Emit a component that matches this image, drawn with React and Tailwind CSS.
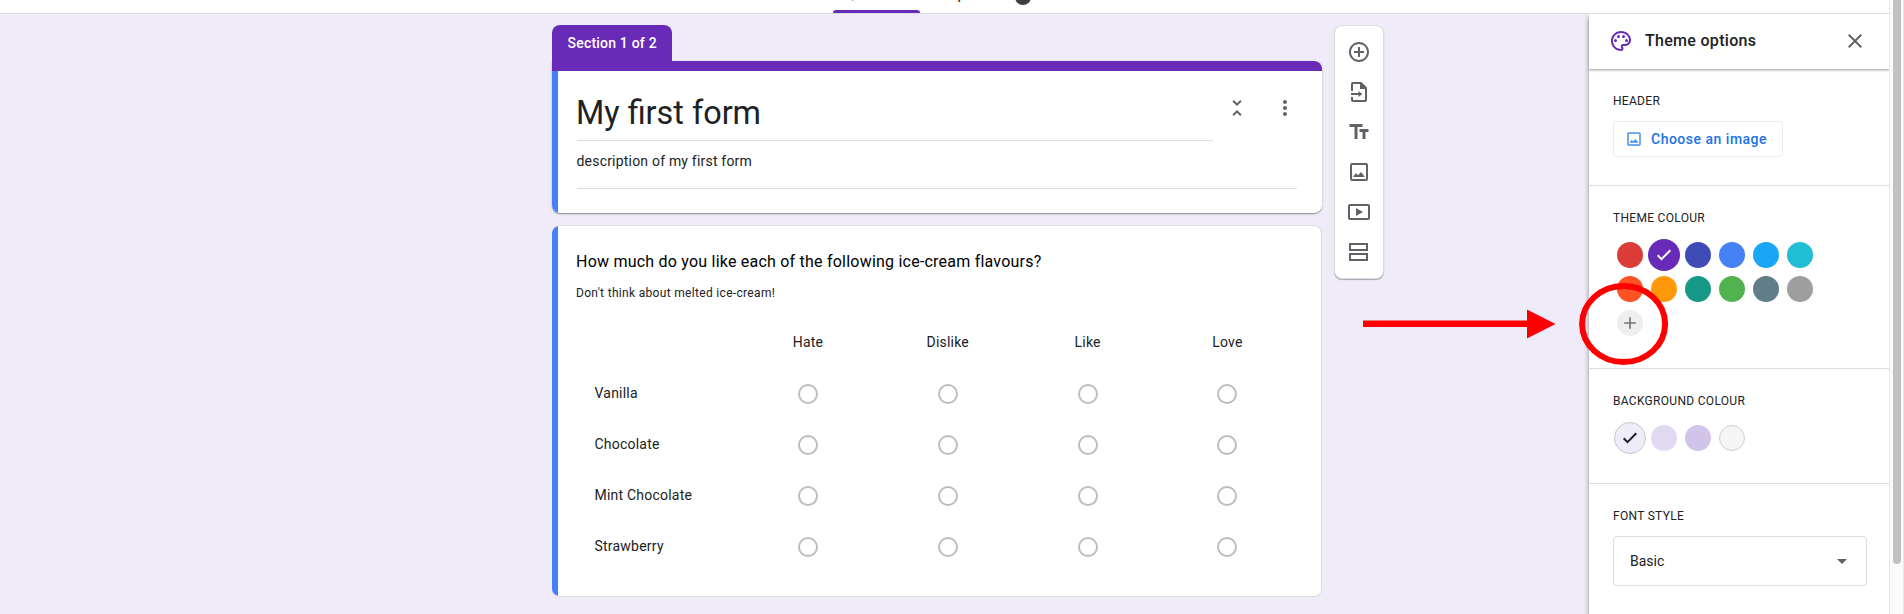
import { MdAddCircleOutline, MdTextFields, MdUnfoldLess, MdMoreVert, MdClose, MdAdd, MdArrowDropDown, MdOutlinePalette } from "react-icons/md";

function ImageIcon({ className }) {
  return (
    <svg viewBox="0 0 24 24" className={className} fill="currentColor">
      <path fillRule="evenodd" d="M5 3h14a2 2 0 0 1 2 2v14a2 2 0 0 1-2 2H5a2 2 0 0 1-2-2V5a2 2 0 0 1 2-2zm0 2v14h14V5H5z" />
      <path d="M6 17l3-4 2 2.2L14 12l4 5z" />
    </svg>
  );
}

function ImportIcon() {
  return (
    <svg viewBox="0 0 24 24" className="size-6" fill="none" stroke="currentColor" strokeWidth="2">
      <path d="M5 11V4a1 1 0 0 1 1-1h8l5 5v12a1 1 0 0 1-1 1H6a1 1 0 0 1-1-1v-3" />
      <path d="M13 2.500V9h6.500z" fill="currentColor" stroke="none" />
      <path d="M4 14h8" />
      <path d="M11.500 11l3.800 3-3.800 3z" fill="currentColor" stroke="none" />
    </svg>
  );
}

function VideoIcon() {
  return (
    <svg viewBox="0 0 24 24" className="size-6" fill="none" stroke="currentColor" strokeWidth="2">
      <rect x="2" y="5" width="20" height="14" rx="1" />
      <path d="M9 8v8l7-4z" fill="currentColor" stroke="none" />
    </svg>
  );
}

function SectionIcon() {
  return (
    <svg viewBox="0 0 24 24" className="size-6" fill="none" stroke="currentColor" strokeWidth="2">
      <rect x="3" y="4" width="17" height="6" />
      <rect x="3" y="14" width="17" height="6" />
    </svg>
  );
}

function CheckIcon({ className }) {
  return (
    <svg viewBox="0 0 18 18" className={className} fill="none" stroke="currentColor" strokeWidth="2">
      <path d="M2.700 9.300l3.800 3.800 8.800-8.800" />
    </svg>
  );
}

const tools = [
  <MdAddCircleOutline className="size-6" />,
  <ImportIcon />,
  <MdTextFields className="size-6" />,
  <ImageIcon className="size-6" />,
  <VideoIcon />,
  <SectionIcon />,
];

const themeColours = [
  "bg-[#db3c37]", "bg-[#672bb7]", "bg-[#3f4cb5]", "bg-[#4481f5]", "bg-[#1ba6f5]", "bg-[#20bed5]",
  "bg-[#ff5225]", "bg-[#ff990a]", "bg-[#179987]", "bg-[#51b250]", "bg-[#617d8b]", "bg-[#9e9e9e]",
];

function Label({ children }) {
  return <h3 className="text-[12px] leading-4 tracking-[0.3px] text-[#202124]">{children}</h3>;
}

function Header() {
  return (
    <header className="flex h-[14px] shrink-0 items-end overflow-hidden border-b border-[#dadce0] bg-white pl-[833px] text-sm font-medium">
      <div className="flex w-[87px] flex-col items-center">
        <span className="mb-[6px] leading-5 text-[#672bb7]">Questions</span>
        <span className="h-[3px] w-full shrink-0 rounded-t-[3px] bg-[#672bb7]" />
      </div>
      <div className="mb-2 ml-[24px] flex items-end gap-[2px] text-[#3c4043]">
        <span className="mb-px w-[69px] leading-5 [text-indent:-11px] tracking-[0.3px]">Responses</span>
        <span className="size-4 rounded-full bg-[#3c4043]" />
      </div>
    </header>
  );
}

function TitleCard() {
  return (
    <section>
      <div className="h-9 w-[120px] rounded-t-lg bg-[#672bb7] pl-[15.500px] pt-2 text-[14px] font-medium leading-5 tracking-[0.2px] text-white">
        Section 1 of 2
      </div>
      <div className="h-[152px] overflow-hidden rounded-b-lg rounded-tr-lg bg-white shadow-[0_1px_1px_rgba(0,0,0,0.3),0_1px_3px_rgba(0,0,0,0.15)]">
        <div className="h-[10px] bg-[#672bb7]" />
        <div className="h-[142px] border-l-[6px] border-[#4481f5] pl-[19px] pr-[25px]">
          <div className="flex">
            <h1 className="-mr-px h-[70px] w-[636px] border-b border-[#dadce0] pt-[22px] text-[32.400px] leading-[40px] text-[#202124] [text-indent:-1px]">My first form</h1>
            <div className="ml-px flex gap-6 pl-3 pt-[25px] text-[#5f6368]">
              <MdUnfoldLess className="size-6" />
              <MdMoreVert className="size-6" />
            </div>
          </div>
          <p className="h-12 border-b border-[#dadce0] pt-[10px] text-[14px] leading-5 tracking-[0.2px] text-[#202124] [text-indent:-0.5px]">description of my first form</p>
        </div>
      </div>
    </section>
  );
}

function QuestionCard() {
  return (
    <section className="mt-3 h-[372px] overflow-hidden rounded-lg border border-l-0 border-[#dadce0] bg-white">
      <div className="h-full border-l-[6px] border-[#4481f5] pl-[18px]">
        <h2 className="pt-6 text-[16px] leading-6 tracking-[0.22px] text-black">How much do you like each of the following ice-cream flavours?</h2>
        <p className="pt-[11px] text-[12px] leading-4 tracking-[0.32px] text-[#202124]">Don't think about melted ice-cream!</p>
        <div className="mt-[16px] flex h-[51px] items-center pl-[162px] text-[14px] tracking-[0.2px] text-[#202124]">
          {["Hate", "Dislike", "Like", "Love"].map((c) => (
            <span key={c} className="w-[139.850px] text-center">{c}</span>
          ))}
        </div>
        {["Vanilla", "Chocolate", "Mint Chocolate", "Strawberry"].map((r) => (
          <div key={r} className="flex h-[51px] items-center pl-[18.500px] text-[14px] tracking-[0.22px] text-[#202124]">
            <span className="w-[143.500px] pb-px">{r}</span>
            {[0, 1, 2, 3].map((i) => (
              <span key={i} className="flex w-[139.850px] justify-center">
                <span className="size-5 rounded-full border-2 border-[#bdbdbd]" />
              </span>
            ))}
          </div>
        ))}
      </div>
    </section>
  );
}

function ThemePanel() {
  return (
    <aside className="z-10 w-[300px] shrink-0 bg-white shadow-[0_4px_5px_rgba(0,0,0,0.4)]">
      <div className="flex h-14 items-center border-b border-[#bdbdbd] pb-px pl-5 pr-[22px] shadow-[0_1px_2px_rgba(0,0,0,0.2)]">
        <MdOutlinePalette className="size-6 text-[#672bb7]" />
        <h2 className="ml-3 flex-1 pb-px text-[16px] font-medium leading-6 tracking-[0.3px] text-[#202124]">Theme options</h2>
        <MdClose className="size-6 text-[#5f6368]" />
      </div>
      <div className="h-[116px] border-b border-[#dadce0] pl-6 pt-[23px]">
        <Label>HEADER</Label>
        <button className="mt-3 flex h-9 w-[170px] items-center rounded border border-[#e8eaed] pl-[11px] text-[#1a73e8]">
          <ImageIcon className="size-[18px] opacity-80" />
          <span className="ml-2 text-[14px] font-medium tracking-[0.5px]">Choose an image</span>
        </button>
      </div>
      <div className="h-[183px] border-b border-[#dadce0] pl-6 pt-6">
        <Label>THEME COLOUR</Label>
        <div className="mt-[12px] grid w-[204px] grid-cols-6">
          {themeColours.map((c, i) => (
            <span key={c} className="flex size-[34px] items-center justify-center">
              <span className={`${c} ${i === 1 ? "size-8" : "size-[26px]"} flex shrink-0 items-center justify-center rounded-full`}>
                {i === 1 && <CheckIcon className="size-[18px] text-white" />}
              </span>
            </span>
          ))}
          <span className="flex size-[34px] items-center justify-center">
            <span className="flex size-[26px] items-center justify-center rounded-full bg-[#eeeeee]">
              <MdAdd className="size-5 text-[#757575]" />
            </span>
          </span>
        </div>
      </div>
      <div className="h-[115px] border-b border-[#dadce0] pl-6 pt-6">
        <Label>BACKGROUND COLOUR</Label>
        <div className="mt-[12px] flex">
          <span className="flex size-[34px] items-center justify-center">
            <span className="flex size-8 items-center justify-center rounded-full border border-[#c8c8c8] bg-[#f0ebf8]">
              <CheckIcon className="size-[18px] text-[#202124]" />
            </span>
          </span>
          <span className="flex size-[34px] items-center justify-center"><span className="size-[26px] rounded-full bg-[#e1d8f1]" /></span>
          <span className="flex size-[34px] items-center justify-center"><span className="size-[26px] rounded-full bg-[#d1c4e9]" /></span>
          <span className="flex size-[34px] items-center justify-center"><span className="size-[26px] rounded-full border border-[#d0d0d0] bg-[#f5f5f5]" /></span>
        </div>
      </div>
      <div className="pl-6 pt-6">
        <Label>FONT STYLE</Label>
        <div className="mt-3 flex h-[50px] w-[254px] items-center justify-between rounded border border-[#dadce0] pl-4 pr-3 text-[14px] text-[#202124]">
          <span>Basic</span>
          <MdArrowDropDown className="size-6 text-[#5f6368]" />
        </div>
      </div>
    </aside>
  );
}

function Annotation() {
  return (
    <svg className="pointer-events-none absolute left-0 top-0 z-20" width="1904" height="614">
      <path d="M1363 320.500h164v-11l28.500 14.500-28.500 14.500v-11.500h-164z" fill="#fe0000" />
      <ellipse cx="1623.600" cy="324" rx="41.500" ry="38" fill="none" stroke="#fe0000" strokeWidth="6" />
    </svg>
  );
}

export default function App() {
  return (
    <div className="relative flex h-[614px] w-[1904px] overflow-hidden bg-[#f0ebf8] [font-family:Roboto,sans-serif]">
      <div className="flex w-[1889px] flex-col">
        <Header />
        <div className="flex min-h-0 flex-1 overflow-hidden">
          <main className="flex flex-1 items-start pl-[552px] pt-[11px]">
            <div className="w-[770px]">
              <TitleCard />
              <QuestionCard />
            </div>
            <nav className="ml-3 flex w-[50px] flex-col items-center rounded-lg border border-[#dadce0] bg-white py-[6px] text-[#5f6368] shadow-[0_1px_1px_rgba(0,0,0,0.3)]">
              {tools.map((t, i) => (
                <button key={i} className="flex size-10 items-center justify-center">{t}</button>
              ))}
            </nav>
          </main>
          <ThemePanel />
        </div>
      </div>
      <div className="h-full w-[15px] border-x border-[#e8e8e8] bg-[#fafafa] pl-[3px]">
        <div className="h-[564px] w-2 rounded-b bg-[#c1c1c1]" />
      </div>
      <Annotation />
    </div>
  );
}
